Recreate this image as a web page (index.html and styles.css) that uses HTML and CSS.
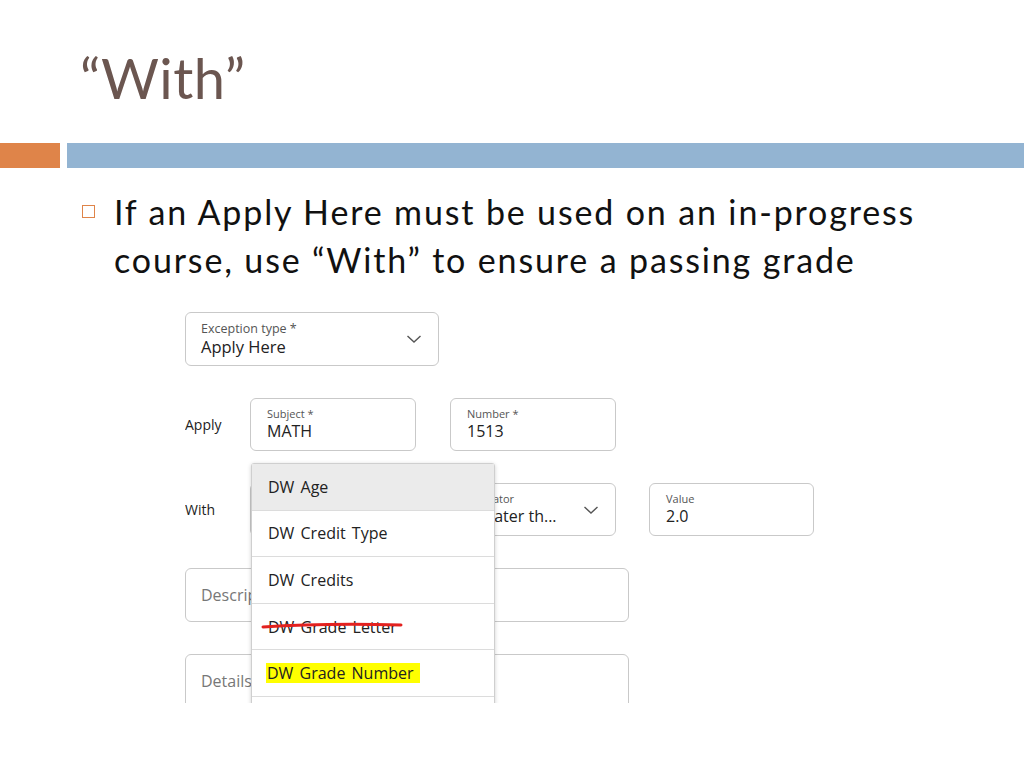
FILE: index.html
```html
<!DOCTYPE html>
<html>
<head>
<meta charset="utf-8">
<link rel="stylesheet" href="styles.css">
</head>
<body>
<div class="slide">
  <h1 class="title">“With”</h1>
  <div class="bars"><div class="bar-orange"></div><div class="bar-blue"></div></div>
  <div class="bullet">
    <span class="box-bullet"></span>
    <p class="bullet-text">If an Apply Here must be used on an in-progress<br>course, use “With” to ensure a passing grade</p>
  </div>
  <div class="shot">
    <div class="field field-exc">
      <div class="fbody">
        <span class="flabel">Exception type *</span>
        <span class="fvalue">Apply Here</span>
      </div>
      <svg class="chev" width="16" height="10" viewBox="0 0 16 10"><polyline points="1.5,2 8,8 14.5,2" fill="none" stroke="#555" stroke-width="1.4"/></svg>
    </div>
    <div class="row row-apply">
      <span class="rlabel">Apply</span>
      <div class="field small"><div class="fbody"><span class="flabel">Subject *</span><span class="fvalue">MATH</span></div></div>
      <div class="field small"><div class="fbody"><span class="flabel">Number *</span><span class="fvalue">1513</span></div></div>
    </div>
    <div class="row row-with">
      <span class="rlabel">With</span>
      <div class="field small"></div>
      <div class="field small op"><div class="fbody"><span class="flabel">Operator</span><span class="fvalue">Greater th...</span></div>
        <svg class="chev" width="16" height="10" viewBox="0 0 16 10"><polyline points="1.5,2 8,8 14.5,2" fill="none" stroke="#555" stroke-width="1.4"/></svg>
      </div>
      <div class="field small val"><div class="fbody"><span class="flabel">Value</span><span class="fvalue">2.0</span></div></div>
    </div>
    <div class="field wide"><span class="placeholder">Description</span></div>
    <div class="field wide tall"><span class="placeholder">Details</span></div>

    <ul class="menu">
      <li class="item active">DW Age</li>
      <li class="item">DW Credit Type</li>
      <li class="item">DW Credits</li>
      <li class="item struck">DW Grade Letter
        <svg class="strike" width="142" height="10" viewBox="0 0 142 10"><path d="M2,6 C40,3.5 100,3 140,4" fill="none" stroke="#e3211f" stroke-width="3" stroke-linecap="round"/></svg>
      </li>
      <li class="item"><span class="hl">DW Grade Number</span></li>
      <li class="item"></li>
    </ul>
  </div>
</div>
</body>
</html>
```

FILE: styles.css
```css
html, body {
  margin: 0;
  padding: 0;
  background: #fff;
}
.slide {
  width: 1024px;
  height: 768px;
  position: relative;
  overflow: hidden;
  background: #fff;
  display: flex;
  flex-direction: column;
}
.title {
  margin: 0;
  padding: 48px 0 0 80px;
  height: 95px;
  box-sizing: border-box;
  font-family: "Lato", "Liberation Sans", sans-serif;
  font-weight: 400;
  font-size: 56px;
  line-height: 60px;
  color: #6b5650;
  letter-spacing: 0.5px;
}
.bars {
  margin-top: 48px;
  height: 25px;
  display: flex;
  gap: 7px;
}
.bar-orange {
  width: 60px;
  background: #df8449;
}
.bar-blue {
  flex: 1;
  background: #93b4d2;
}
.bullet {
  display: flex;
  margin-top: 20px;
  padding-left: 82px;
}
.box-bullet {
  width: 11px;
  height: 11px;
  border: 1.5px solid #df8449;
  margin-top: 17px;
  flex: none;
}
.bullet-text {
  margin: 0 0 0 19px;
  font-family: "Lato", "Liberation Sans", sans-serif;
  font-size: 34px;
  line-height: 48px;
  color: #111;
  letter-spacing: 1.85px;
  word-spacing: 0px;
}
.shot {
  position: absolute;
  left: 185px;
  top: 312px;
  width: 640px;
  height: 391px;
  overflow: hidden;
  font-family: "Open Sans", "Noto Sans", sans-serif;
  color: #222;
}
.field {
  box-sizing: border-box;
  border: 1px solid #c9c9c9;
  border-radius: 6px;
  background: #fff;
  display: flex;
  align-items: center;
  position: relative;
}
.field-exc {
  width: 254px;
  height: 54px;
  padding: 0 16px 0 15px;
  justify-content: space-between;
}
.fbody {
  display: flex;
  flex-direction: column;
}
.flabel {
  font-size: 12px;
  line-height: 15px;
  color: #555;
}
.field-exc .flabel {
  font-size: 12.5px;
}
.fvalue {
  font-size: 16px;
  line-height: 21px;
  color: #222;
}
.field-exc .fvalue {
  font-size: 16.5px;
}
.row {
  display: flex;
  align-items: center;
  gap: 34px;
}
.row-apply {
  margin-top: 32px;
}
.row-with {
  margin-top: 32px;
}
.rlabel {
  width: 31px;
  font-size: 14px;
  color: #222;
}
.small {
  width: 166px;
  height: 53px;
  padding: 0 16px;
  justify-content: space-between;
}
.small.val {
  width: 165px;
  margin-left: -1px;
}
.small .flabel {
  font-size: 11px;
  line-height: 14px;
}
.wide {
  width: 444px;
  height: 54px;
  margin-top: 32px;
  padding: 0 15px;
}
.tall {
  height: 80px;
  align-items: flex-start;
  padding-top: 15px;
}
.placeholder {
  font-size: 16px;
  color: #777;
}
.menu {
  position: absolute;
  left: 66px;
  top: 151px;
  width: 242px;
  margin: 0;
  padding: 0;
  list-style: none;
  background: #fff;
  border: 1px solid #cfcfcf;
  border-radius: 3px 3px 0 0;
  box-shadow: 0 1px 4px rgba(0,0,0,0.18);
}
.item {
  position: relative;
  box-sizing: border-box;
  height: 46.6px;
  padding: 0 16px;
  display: flex;
  align-items: center;
  border-bottom: 1px solid #dcdcdc;
  font-size: 16px;
  color: #222;
  word-spacing: 2px;
}
.item.active {
  background: #ebebeb;
}
.strike {
  position: absolute;
  left: 9px;
  top: 17px;
}
.hl {
  background: #ffff00;
  padding: 0 6px 0 1px;
  margin-left: -2px;
  line-height: 20px;
}
```
